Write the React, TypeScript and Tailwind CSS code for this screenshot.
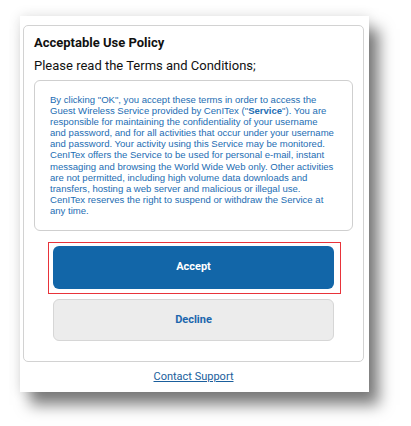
const lines: React.ReactNode[] = [
  <>By clicking "OK", you accept these terms in order to access the</>,
  <>
    Guest Wireless Service provided by CenITex ("<b>Service</b>"). You are
  </>,
  <>responsible for maintaining the confidentiality of your username</>,
  <>and password, and for all activities that occur under your username</>,
  <>and password. Your activity using this Service may be monitored.</>,
  <>CenITex offers the Service to be used for personal e-mail, instant</>,
  <>messaging and browsing the World Wide Web only. Other activities</>,
  <>are not permitted, including high volume data downloads and</>,
  <>transfers, hosting a web server and malicious or illegal use.</>,
  <>CenITex reserves the right to suspend or withdraw the Service at</>,
  <>any time.</>,
];

export default function App() {
  return (
    <div className="w-[411px] h-[426px] bg-white pl-[20px] pt-[16px] font-['Roboto',Arial,sans-serif]">
      <div className="w-[349px] h-[376px] bg-white pl-[3px] pt-[9px] pr-[5px] shadow-[10px_13px_14px_rgba(0,0,0,0.5),0_0_12px_rgba(0,0,0,0.12)]">
        <div className="h-[337px] rounded-[5px] border border-[#d2d2d2] px-[10px] pt-[8px]">
          <div className="text-[13px] font-bold text-[#111] leading-[18px]">
            Acceptable Use Policy
          </div>
          <div className="text-[13px] text-[#111] leading-[18px] mt-[5px]">
            Please read the Terms and Conditions;
          </div>
          <div className="mt-[5px] h-[151px] rounded-[6px] border border-[#cfcfcf] pl-[15px] pt-[13px] font-['Liberation_Sans',Arial,sans-serif] text-[9.55px] leading-[11.1px] text-[#1c6db3] whitespace-nowrap">
            {lines.map((l, i) => (
              <div key={i}>{l}</div>
            ))}
          </div>
          <div className="mt-[11px] ml-[14px] w-[293px] h-[52px] border border-[#e8333a] p-[3px_6px_4px_4px]">
            <button className="w-[281px] h-[43px] rounded-[6px] bg-[#1266a8] text-white text-[11px] font-bold">
              Accept
            </button>
          </div>
          <button className="mt-[5px] ml-[19px] w-[281px] h-[42px] rounded-[6px] bg-[#ececec] border border-[#d6d6d6] text-[#1b66ad] text-[11px] font-bold">
            Decline
          </button>
        </div>
        <div className="text-center mt-[8px] text-[11px] leading-[14px]">
          <a className="text-[#1a5e9c] underline">Contact Support</a>
        </div>
      </div>
    </div>
  );
}
